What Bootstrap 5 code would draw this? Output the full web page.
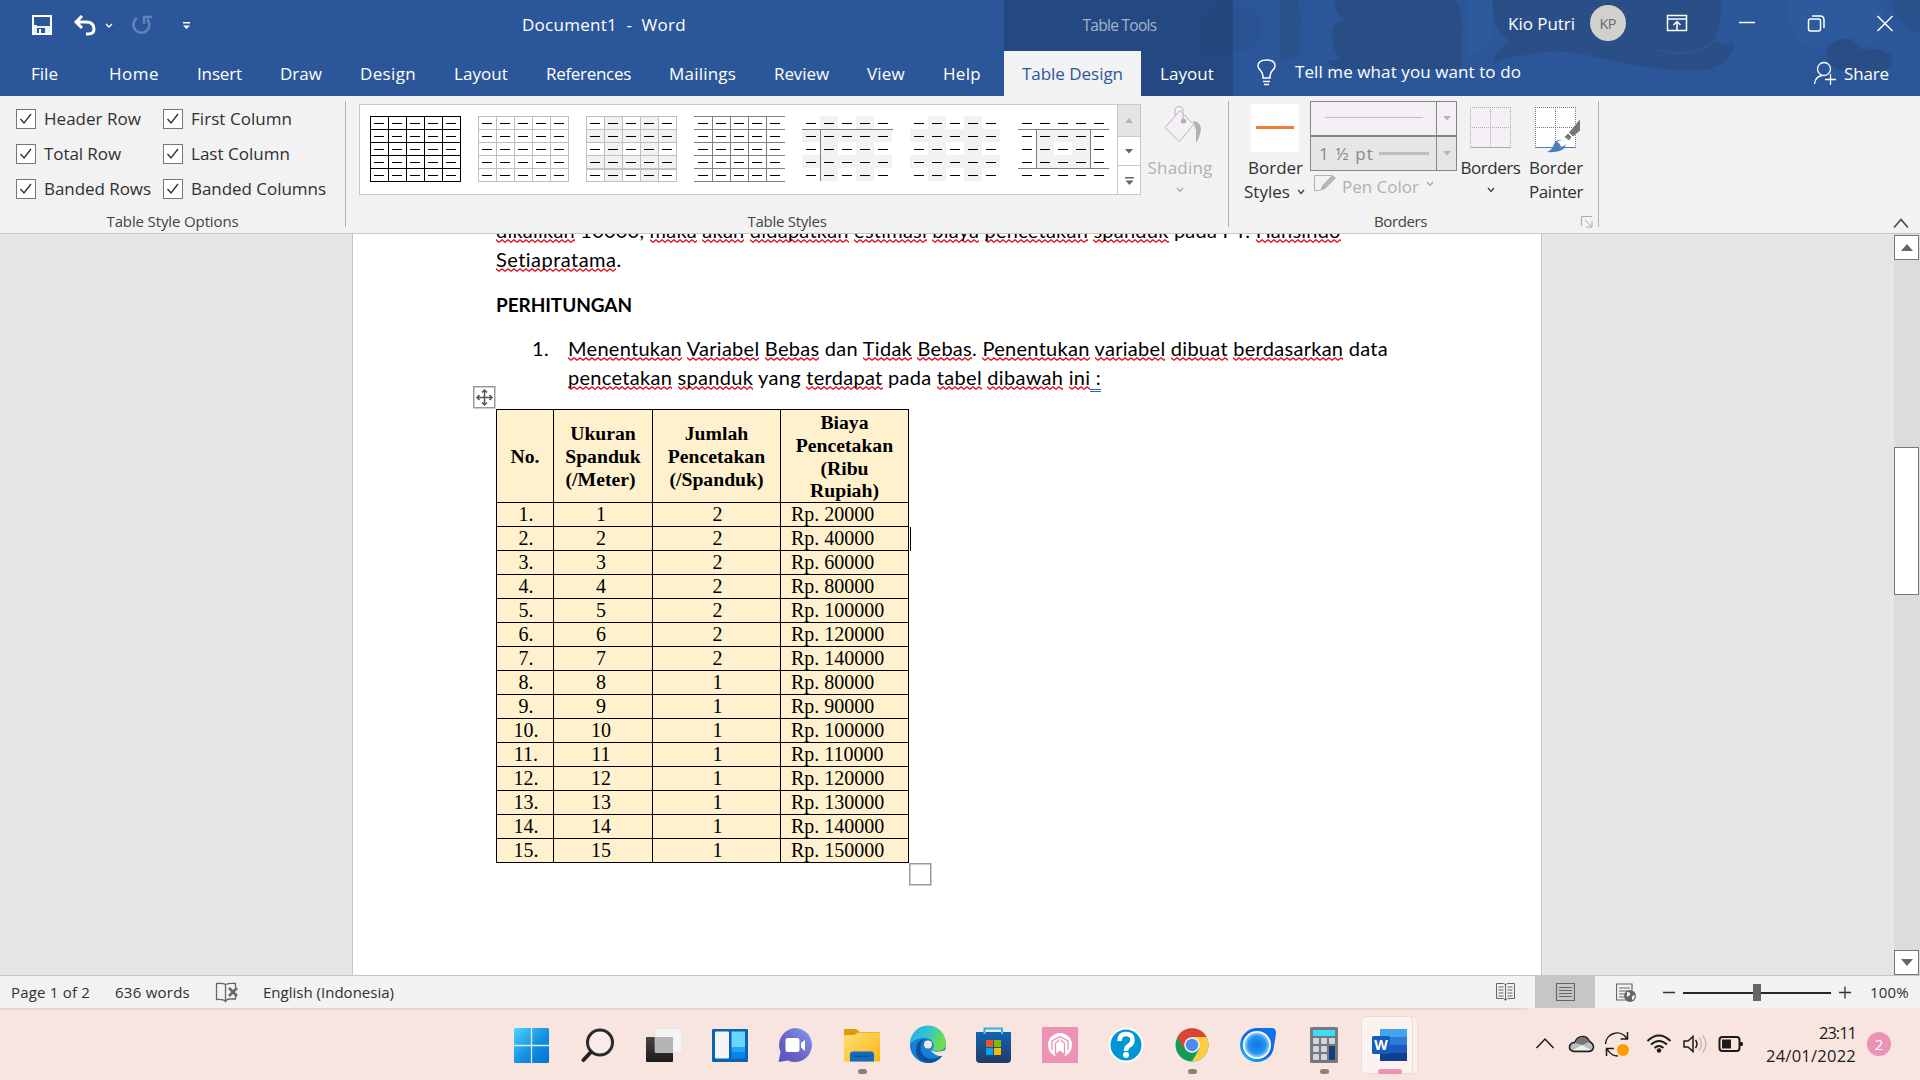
<!DOCTYPE html>
<html lang="id">
<head>
<meta charset="utf-8">
<title>Document1 - Word</title>
<link href="https://cdn.jsdelivr.net/npm/bootstrap@5.3.0/dist/css/bootstrap.min.css" rel="stylesheet">
<style>
body{width:1920px;height:1080px;overflow:hidden;font-family:"Open Sans","Noto Sans",sans-serif;font-size:17px;line-height:24px;color:#303030;background:#e6e6e6}
svg{display:block;flex:none}
[data-w]{display:inline-block;white-space:pre;justify-self:start}
.app-head{height:96px;background:#2b579a;color:#fff}
.head-art{left:1160px;top:0;z-index:0}
.title-row{height:51px;display:grid;grid-template-columns:32px 41px 28px 29px 51px 341px 482px 229px;align-items:center;z-index:1}
.title-row>span,.title-row>svg{margin-bottom:2px}
.tools-tab{background:#23457acc;height:51px;color:#a3b4d0;font-size:15.5px;padding:0 0 2px 2px}
.win-tools{height:47px}
.tab-row{height:45px;display:grid;grid-template-columns:31px 78px 88px 83px 80px 94px 92px 123px 105px 93px 76px 61px 137px 92px 62px 517px 32px 76px;align-items:center;z-index:1}
.tab-open{background:#f2f2f2;color:#2b579a;height:45px}
.tab-ctx{background:#23457acc;height:45px}
.bulb{justify-self:end;margin-right:9px}
.ribbon{height:138px;background:#f2f2f2;border-bottom:1px solid #c8c8c8}
.grp{height:126px;margin-top:5px;border-right:1px solid #b1b1b1}
.grp-main{height:108px}
.g-options{width:346px}.g-styles{width:883px}.g-borders{width:370px}
.caption-line{height:24px;font-size:15px;color:#444}
.opts{display:grid;grid-template-columns:147px 1fr;grid-auto-rows:35px;padding-left:16px;height:108px}
.tick{width:20px;height:20px;border:1.5px solid #767676;background:#fff;margin-right:8px}
.gallery{width:782px;height:91px;margin:3px 0 0 13px;border:1px solid #c8c8c8;background:#fff}
.gal-thumbs{padding:11px 0 0 10px;gap:17px;width:758px}
.gal-nav{width:23px;border-left:1px solid #c8c8c8}
.gal-nav>div{height:29px;border-bottom:1px solid #c8c8c8}
.gal-nav>div:first-child{height:32px;background:#e4e4e4}
.gal-nav>div:last-child{border:0}
.dim{color:#b1b1b1}
.shade-btn{margin-left:6px;width:66px;height:108px}
.b-style{width:81px;height:108px;padding-left:15px}
.combo{width:147px;height:35px;border:1px solid #868686;background:#e6e6e6;color:#868686}
.combo .drop{width:20px;border-left:1px solid #868686}
.combo-top{background:#f5f0f6}
.b-btn{height:108px}
.launcher{margin:0 4px 0 153px}
.work{height:742px;background:#e6e6e6;border-bottom:1px solid #c6c6c6}
.sheet{width:1190px;margin-left:352px;height:741px;background:#fff;border:solid #c6c6c6;border-width:0 1px;overflow:hidden;font-family:Lato,sans-serif;font-size:20px;line-height:29px;color:#000;padding-left:143px}
.para-cut{margin-top:-18px;height:58px}
.sq{padding-bottom:1px;background:url("data:image/svg+xml,%3Csvg xmlns='http://www.w3.org/2000/svg' width='6' height='4'%3E%3Cpath d='M-1 0L0 .8L3 3.2L6 .8L7 0' fill='none' stroke='%23e81123' stroke-width='1.3'/%3E%3C/svg%3E") repeat-x left bottom}
.dbl{border-bottom:3px double #2b62d9}
.doc-h{margin-top:16px;height:29px;font-size:19px}
.item{margin-top:15px;height:58px;display:grid;grid-template-columns:36px 36px 1fr}
.tbl-wrap{margin-top:17px;width:413px;height:454px}
.doc-tbl{border-collapse:collapse;table-layout:fixed;width:412px;font-family:"Liberation Serif",serif;font-size:20px;line-height:22px;background:#fff1ce}
.doc-tbl th,.doc-tbl td{border:1px solid #000;padding:0;text-align:center;height:24px;white-space:pre}
.doc-tbl td{vertical-align:top}
.doc-tbl th{height:93px;font-size:19.7px;line-height:22.7px;vertical-align:middle;padding-top:1px}
.doc-tbl td:nth-child(1){padding-left:2px}.doc-tbl td:nth-child(2){padding-right:4px}.doc-tbl td:nth-child(3){padding-left:2px}
.doc-tbl td:nth-child(4){text-align:left;padding-left:10px}
.handle{left:-23px;top:-23px}.grip{left:413px;top:454px}.caret{left:414px;top:118px;width:1px;height:24px;background:#000}
.scroller{width:26px;background:#dcdcdc;padding-top:1px}
.sc-box{height:25px;width:25px;border:1px solid #777;background:#fff}
.sc-thumb{margin-top:187px;height:148px;width:25px;border:1px solid #777;background:#fff}
.status{height:32px;background:#f2f2f2;font-size:15px;display:grid;grid-template-columns:11px 104px 100px 48px 1233px 39px 60px 21px 254px 50px;align-items:center}
.view-on{background:#c6c6c6;height:32px}
.taskbar{height:72px;background:#f9e5df;color:#1b1b1b;padding-left:499px}
.edge-line{left:0;top:0;width:1527px;height:2px;background:#ecd6d1}
.clock{width:100px;font-size:16.5px;line-height:23px;padding-top:13px}
</style>
<script src="https://cdn.jsdelivr.net/npm/bootstrap@5.3.0/dist/js/bootstrap.bundle.min.js"></script>
</head>
<body class="d-flex flex-column">
<header class="app-head position-relative">
  <svg class="head-art position-absolute" width="760" height="96" viewBox="1160 0 760 96">
    <g fill="#294d83" opacity=".85">
      <path d="M1200 58Q1206 50 1203 44Q1194 20 1212 7Q1222 0 1233 5V60Q1215 52 1200 58z" opacity=".6"/>
      <path d="M1233 8Q1262 2 1262 24Q1264 50 1240 52L1233 50z" opacity=".35"/>
      <path d="M1280 0H1298Q1304 24 1298 42Q1304 50 1304 52Q1290 62 1280 58z" opacity=".7"/>
      <path d="M1335 0H1456Q1466 20 1460 48Q1464 62 1460 70H1342Q1328 66 1326 59Q1336 62 1340 58Q1330 48 1333 28Q1338 20 1344 20Q1334 12 1335 0z"/>
      <path d="M1493 0H1721Q1722 22 1714 40Q1724 48 1732 42Q1738 44 1730 56Q1716 74 1680 70Q1640 68 1600 58Q1560 46 1520 56Q1500 58 1493 66Q1494 52 1510 40Q1490 28 1493 0z"/>
      <path d="M1826 56Q1828 38 1846 39Q1858 42 1860 50Q1874 46 1890 54Q1896 62 1886 70Q1872 82 1850 72Q1830 72 1826 56z"/>
      <path d="M1890 0H1920V34Q1900 28 1890 0z" opacity=".7"/>
    </g>
    <g fill="#3564a8" opacity=".25"><path d="M1790 0H1880Q1890 40 1870 44Q1850 30 1820 50Q1780 40 1790 0z"/><path d="M1466 0h26v40l-26 20z"/></g>
    <path d="M1658 50Q1690 60 1716 40" stroke="#2b579a" stroke-width="2" fill="none"/>
  </svg>
  <div class="title-row position-relative">
    <span></span>
    <svg width="20" height="20" viewBox="32 15 20 20"><path d="M33 16h18v18H33z" fill="none" stroke="#fff" stroke-width="2"/><path d="M32 26h20v9H32zM34 15h3v12h-3z" fill="#fff" opacity=".9"/><path d="M34 17h16v8H34zM37 28h8v5h-8z" fill="#2b579a"/><path d="M39 29h2v4h-2z" fill="#fff"/></svg>
    <svg width="24" height="22" viewBox="73 14 24 22"><path d="M82 16l-6 6 6 6M77 22h9q8 0 8 7 0 5-6 5h-2" fill="none" stroke="#fff" stroke-width="3"/></svg>
    <svg width="16" height="10" viewBox="102 20 16 10"><path d="M107 24l3 3 3-3" fill="none" stroke="#fff" stroke-width="1.3"/></svg>
    <svg width="22" height="22" viewBox="130 14 22 22"><path d="M137 18a8 8 0 1 0 10 1M144 24v-7h8" fill="none" stroke="#5f82b8" stroke-width="2.6"/></svg>
    <svg width="10" height="10" viewBox="181 20 10 10"><path d="M183 22h7v1.5h-7zM183 25.500h7l-3.500 3.500z" fill="#fff"/></svg>
    <span data-w="164">Document1  -  Word</span>
    <div class="tools-tab d-flex align-items-center justify-content-center"><span data-w="74">Table Tools</span></div>
  </div>
  <div class="win-tools position-absolute top-0 end-0 d-flex align-items-center">
    <span data-w="67">Kio Putri</span>
    <svg width="345" height="47" viewBox="1575 0 345 47"><circle cx="1608" cy="23" r="18" fill="#d2d0ce"/><text x="1608" y="28.500" text-anchor="middle" font-size="14.500" fill="#6a6a6a" textLength="17">KP</text>
      <g fill="none" stroke="#fff" stroke-width="1.500"><path d="M1667.500 15.500h19v15h-19zM1667.500 19h19M1677 30v-8M1673.500 25l3.500-3.500 3.500 3.500M1739 22.500h16"/><rect x="1808.500" y="19" width="12" height="12" rx="2"/><path d="M1812 16h8q4 0 4 4v8"/><path d="M1877.500 16l15 15M1892.500 16l-15 15"/></g></svg>
  </div>
  <nav class="tab-row position-relative">
    <span></span><span data-w="27">File</span><span data-w="50">Home</span><span data-w="45">Insert</span><span data-w="42">Draw</span><span data-w="56">Design</span><span data-w="54">Layout</span><span data-w="85">References</span><span data-w="67">Mailings</span><span data-w="55">Review</span><span data-w="38">View</span><span data-w="38">Help</span>
    <div class="tab-open d-flex align-items-center justify-content-center"><span data-w="101">Table Design</span></div>
    <div class="tab-ctx d-flex align-items-center justify-content-center"><span data-w="54">Layout</span></div>
    <svg class="bulb" width="40" height="30" viewBox="1246 59 40 30"><path d="M1263 78v-2q0-2-2-5-3-3-3-5 0-6 8.500-6t8.500 6q0 2-3 5-2 3-2 5v2zM1263 81.500h7M1264 84.500h5" fill="none" stroke="#fff" stroke-width="1.500"/></svg>
    <span class="pb-1" data-w="226">Tell me what you want to do</span>
    <svg width="26" height="30" viewBox="1812 62 26 30"><g fill="none" stroke="#fff" stroke-width="1.300"><circle cx="1824" cy="72" r="6.500"/><path d="M1814.500 87q1-8 8-8.500M1830.500 77v11M1825 82.500h11"/></g></svg>
    <span data-w="45">Share</span>
  </nav>
</header>

<section class="ribbon d-flex position-relative">
  <div class="grp g-options">
    <div class="opts" id="opts"></div>
    <div class="caption-line text-center"><span data-w="132">Table Style Options</span></div>
  </div>
  <div class="grp g-styles">
    <div class="grp-main d-flex">
      <div class="gallery d-flex">
        <div class="gal-thumbs d-flex" id="thumbs"></div>
        <div class="gal-nav">
          <div class="d-flex align-items-center justify-content-center"><svg width="8" height="5"><path d="M0 5L4 0l4 5z" fill="#b5b5b5"/></svg></div>
          <div class="d-flex align-items-center justify-content-center"><svg width="8" height="5"><path d="M0 0h8L4 4.500z" fill="#666"/></svg></div>
          <div class="d-flex align-items-center justify-content-center"><svg width="9" height="8"><path d="M0 0h9v1.500H0zM.5 3.500h8l-4 4.500z" fill="#666"/></svg></div>
        </div>
      </div>
      <div class="shade-btn d-flex flex-column align-items-center dim">
        <svg width="66" height="55" viewBox="1147 101 66 55"><path d="M1165 127.500l15-17 13.500 14-14 17z" fill="#f5f0f6" stroke="#b5b5b5"/><path d="M1175 116v-6q0-3.500 4-3.500t4 3.500v10" fill="none" stroke="#b5b5b5"/><circle cx="1183.500" cy="121" r="2.600" fill="#b1b1b1"/><path d="M1193 121q7 0 8 8-1 8-5 14v-13z" fill="#b1b1b1"/></svg>
        <span data-w="65">Shading</span>
        <svg class="mt-1" width="8" height="12"><path d="M1 4l3 3.500L7 4" fill="none" stroke="#aaa" stroke-width="1.300"/></svg>
      </div>
    </div>
    <div class="caption-line text-center"><span data-w="79">Table Styles</span></div>
  </div>
  <div class="grp g-borders">
    <div class="grp-main d-flex">
      <div class="b-style">
        <svg width="66" height="55" viewBox="1244 101 66 55"><path d="M1251 104h48v48h-48z" fill="#fff"/><path d="M1256 126h38v3h-38z" fill="#ed7d31"/></svg>
        <div class="ps-1"><span data-w="55">Border</span></div>
        <div class="d-flex align-items-center"><span data-w="46">Styles</span><svg class="ms-2" width="8" height="8"><path d="M0 2l3 3.500L6 2" fill="none" stroke="#444" stroke-width="1.400"/></svg></div>
      </div>
      <div>
        <div class="combo combo-top d-flex justify-content-between align-items-stretch"><svg width="125" height="33"><path d="M14 15.500h98" stroke="#c9b8cd"/></svg><div class="drop d-flex align-items-center justify-content-center"><svg width="8" height="5"><path d="M0 0h8L4 4.500z" fill="#b5b5b5"/></svg></div></div>
        <div class="combo d-flex justify-content-between align-items-stretch"><div class="d-flex align-items-center ps-2"><span data-w="55">1 ½ pt</span><svg class="ms-1" width="51" height="3"><path d="M1 0h50v3H1z" fill="#bdbdbd"/></svg></div><div class="drop d-flex align-items-center justify-content-center"><svg width="8" height="5"><path d="M0 0h8L4 4.500z" fill="#b5b5b5"/></svg></div></div>
        <div class="dim d-flex align-items-center"><svg width="32" height="24" viewBox="1310 173 32 24"><path d="M1332 175.500h-17.500v15h5" fill="none" stroke="#b1b1b1"/><path d="M1320 191l2-5 10-11 4 3-11 11z" fill="#b5b5b5"/></svg><span class="pt-1" data-w="77">Pen Color</span><svg class="ms-2" width="8" height="8"><path d="M0 1l3 3.500L6 1" fill="none" stroke="#aaa" stroke-width="1.300"/></svg></div>
      </div>
      <div class="b-btn d-flex flex-column align-items-center">
        <svg width="67" height="55" viewBox="1457 101 67 55"><path d="M1470 107h41v41h-41z" fill="#f5f0f6"/><path d="M1470 107.500h41M1470 127.500h41M1470.500 107v41M1490.500 107v41M1510.500 107v41" stroke="#b1a9b3" stroke-dasharray="1 1"/><path d="M1470 147.500h41" stroke="#aaa"/></svg>
        <span data-w="60">Borders</span>
        <svg class="mt-1" width="8" height="12"><path d="M1 4l3 3.500L7 4" fill="none" stroke="#444" stroke-width="1.400"/></svg>
      </div>
      <div class="b-btn d-flex flex-column align-items-center">
        <svg width="64" height="55" viewBox="1524 101 64 55"><path d="M1535 107h41v41h-41z" fill="#fff"/><path d="M1535 107.500h41M1535 127.500h41M1535.500 107v41M1555.500 107v41M1575.500 107v41" stroke="#777" stroke-dasharray="1 1"/><path d="M1535 147.500h41" stroke="#4a7ebb"/><path d="M1580 119.500v11l-7 6-4-4z" fill="#777"/><path d="M1568 133l4 4-3 4-5-4z" fill="#777" stroke="#fff"/><path d="M1547 152q6-3 7-8 3-5 8-4 5 2 3 7-3 6-18 5z" fill="#4a7ebb"/><path d="M1557 142q5-4 9 0 0 4-5 5-1-4-4-5z" fill="#fff"/></svg>
        <span data-w="54">Border</span><span data-w="54">Painter</span>
      </div>
    </div>
    <div class="caption-line d-flex justify-content-end align-items-center"><span data-w="53">Borders</span><svg class="launcher" width="14" height="13"><path d="M1.500 11V1.500H12M5 5l7 7M12 6v6H6" fill="none" stroke="#aaa"/></svg></div>
  </div>
  <svg class="ms-auto align-self-end me-2 mb-1" width="22" height="14" viewBox="1890 215 22 14"><path d="M1894 227.500l7-8 7 8" fill="none" stroke="#444" stroke-width="1.500"/></svg>
</section>

<main class="work d-flex justify-content-between">
  <article class="sheet">
    <div class="para-cut"><span data-w="845"><span class="sq">dikalikan</span> 10000, <span class="sq">maka</span> <span class="sq">akan</span> <span class="sq">didapatkan</span> <span class="sq">estimasi</span> <span class="sq">biaya</span> <span class="sq">pencetakan</span> <span class="sq">spanduk</span> pada PT. <span class="sq">Hansindo</span></span><br><span data-w="126"><span class="sq">Setiapratama</span>.</span></div>
    <div class="doc-h fw-bold"><span data-w="136">PERHITUNGAN</span></div>
    <div class="item"><span></span><span data-w="17">1.</span><div><span data-w="820"><span class="sq">Menentukan</span> <span class="sq">Variabel</span> <span class="sq">Bebas</span> dan <span class="sq">Tidak</span> <span class="sq">Bebas</span>. <span class="sq">Penentukan</span> <span class="sq">variabel</span> <span class="sq">dibuat</span> <span class="sq">berdasarkan</span> data</span><br><span data-w="533"><span class="sq">pencetakan</span> <span class="sq">spanduk</span> yang <span class="sq">terdapat</span> pada <span class="sq">tabel</span> <span class="sq">dibawah</span> <span class="sq">ini</span><span class="dbl"> :</span></span></div></div>
    <div class="tbl-wrap position-relative">
      <table class="doc-tbl">
        <colgroup><col style="width:57px"><col style="width:99px"><col style="width:128px"><col style="width:128px"></colgroup>
        <thead><tr><th>No.</th><th>Ukuran
Spanduk
(/Meter) </th><th>Jumlah
Pencetakan
(/Spanduk)</th><th>Biaya
Pencetakan
(Ribu
Rupiah)</th></tr></thead>
        <tbody id="rows"></tbody>
      </table>
      <svg class="handle position-absolute" width="23" height="23"><rect x=".75" y=".75" width="21" height="21" fill="#fff" stroke="#999" stroke-width="1.500"/><path d="M11.500 4v15M4 11.500h15M9 6.500L11.500 4 14 6.500M9 16.500l2.500 2.500 2.500-2.500M6.500 9L4 11.500 6.500 14M16.500 9l2.500 2.500-2.500 2.500" fill="none" stroke="#555" stroke-width="1.500"/></svg>
      <svg class="grip position-absolute" width="23" height="23"><rect x=".75" y=".75" width="21" height="21" fill="#fff" stroke="#999" stroke-width="1.500"/></svg>
      <div class="caret position-absolute"></div>
    </div>
  </article>
  <div class="scroller d-flex flex-column">
    <div class="sc-box d-flex align-items-center justify-content-center"><svg width="12" height="7"><path d="M0 7L6 0l6 7z" fill="#666"/></svg></div>
    <div class="sc-thumb"></div>
    <div class="sc-box d-flex align-items-center justify-content-center mt-auto"><svg width="12" height="7"><path d="M0 0h12L6 7z" fill="#666"/></svg></div>
  </div>
</main>

<footer class="status">
  <span></span><span data-w="79">Page 1 of 2</span><span data-w="75">636 words</span>
  <svg width="24" height="22" viewBox="215 981 24 22"><path d="M225.500 984.500q-2-1.500-9-1v16q7-.5 9 2 1-2.500 4-2.500h6v-4M225.500 984.500v17M225.500 984.500q3-1.500 10-1v4" fill="none" stroke="#666" stroke-width="1.300"/><path d="M229 988l8 8M237 988l-8 8" stroke="#666" stroke-width="2.600"/></svg>
  <span data-w="131">English (Indonesia)</span>
  <svg width="20" height="20" viewBox="1496 982 20 20"><path d="M1496.500 983.500h7l2 1 2-1h7v15h-7l-2 2-2-2h-7zM1505.500 984v16M1498.500 987h5M1498.500 990h5M1498.500 993h5M1498.500 996h5M1507.500 987h5M1507.500 990h5M1507.500 993h5M1507.500 996h5" fill="none" stroke="#666"/></svg>
  <div class="view-on d-flex align-items-center justify-content-center"><svg width="20" height="20"><path d="M1.500 1.500h18v17h-18zM4 5.500h13M4 8.500h13M4 11.500h13M4 14.500h13" fill="none" stroke="#666" stroke-width="1.200"/></svg></div>
  <span></span>
  <svg width="240" height="24" viewBox="1616 979 240 24"><path d="M1632 989v-6h-15.500v16h9M1619 987h11M1619 990h9M1619 993h6M1619 996h5" fill="none" stroke="#666" stroke-width="1.200"/><circle cx="1630" cy="995" r="6" fill="#666"/><path d="M1627 991q4 0 3 3l-3 2zM1632 995l3-1-1 4-2 1z" fill="#f2f2f2"/><path d="M1663 991.500h12M1839 991.500h12M1845 985.500v12" stroke="#333" stroke-width="1.300"/><path d="M1683 991h148v2h-148z" fill="#262626"/><path d="M1753 983h8v17h-8z" fill="#666"/></svg>
  <span data-w="39">100%</span>
</footer>

<footer class="taskbar d-flex position-relative">
  <div class="edge-line position-absolute"></div>
  <svg width="1028" height="72" viewBox="499 1008 1028 72">
    <defs>
      <linearGradient id="wn" x1="0" y1="0" x2="1" y2="1"><stop offset="0" stop-color="#4fd2ff"/><stop offset=".55" stop-color="#1490df"/><stop offset="1" stop-color="#0072d0"/></linearGradient>
      <linearGradient id="ch" x1="0" y1="1" x2="1" y2="0"><stop offset="0" stop-color="#5a50c4"/><stop offset=".4" stop-color="#6a62c6"/><stop offset="1" stop-color="#7f9cf2"/></linearGradient>
      <linearGradient id="fd" x1="0" y1="0" x2="1" y2="1"><stop offset="0" stop-color="#ffdc75"/><stop offset="1" stop-color="#fbb813"/></linearGradient>
      <linearGradient id="eg" x1="0" y1="0" x2="1" y2=".4"><stop offset="0" stop-color="#2ba6e8"/><stop offset=".5" stop-color="#30c3d4"/><stop offset="1" stop-color="#6be04a"/></linearGradient>
      <linearGradient id="st" x1="0" y1="0" x2="0" y2="1"><stop offset="0" stop-color="#0f65b6"/><stop offset="1" stop-color="#233a63"/></linearGradient>
      <radialGradient id="rg"><stop offset="0" stop-color="#1573ee"/><stop offset=".7" stop-color="#2196f0"/><stop offset="1" stop-color="#a9d6f8"/></radialGradient>
      <linearGradient id="rb" x1="1" y1="0" x2="0" y2="1"><stop offset="0" stop-color="#0d78f2"/><stop offset=".5" stop-color="#1264ee"/><stop offset="1" stop-color="#19c6f5"/></linearGradient>
      <linearGradient id="dk" x1="0" y1="0" x2="0" y2="1"><stop offset="0" stop-color="#474543"/><stop offset="1" stop-color="#1b1a19"/></linearGradient>
    </defs>
    <rect x="514" y="1028" width="35" height="35" rx="1.500" fill="url(#wn)"/><path d="M531.500 1028v35M514 1045.500h35" stroke="#d9ecf8" stroke-width="1.300"/>
    <circle cx="600" cy="1042.500" r="12.500" fill="#f9ebe9" stroke="#2b2b2b" stroke-width="3"/><path d="M591 1052l-7.500 8" stroke="#222" stroke-width="4" stroke-linecap="round"/>
    <rect x="646" y="1037" width="27" height="25" rx="1" fill="url(#dk)"/><rect x="655" y="1028.500" width="27" height="24" rx="1" fill="#f4f4f4" stroke="#ddd"  stroke-width=".6"/><path d="M655 1037h18v15.500h-18z" fill="#b6b5b4"/>
    <rect x="712" y="1029" width="36" height="33" rx="1" fill="#0c62b4"/><rect x="715" y="1031.500" width="14" height="27" rx="1" fill="#f5f5f5"/><path d="M731.500 1031.500h13.500v16h-13.500z" fill="#69d6ff"/><path d="M731.500 1047h13.500v5h-13.500z" fill="#1ea4f5"/><path d="M731.500 1052h13.500v6.500h-13.500z" fill="#0b83ea"/>
    <path d="M795 1028a17 17 0 1 1-7 32.500l-9.500 1.500 2-10A17 17 0 0 1 795 1028z" fill="url(#ch)"/><rect x="785.500" y="1038" width="14" height="14" rx="2" fill="#fff"/><path d="M801 1043l4-3v11l-4-3.500z" fill="#fff"/>
    <path d="M844 1030q0-1 1-1h11l4 3h19.500v4H844z" fill="#dc9a0b"/><path d="M844 1035h10l4-2.500h22v29H844z" fill="url(#fd)"/><path d="M850 1061.500v-7q0-3 3-3h18q3 0 3 3v7z" fill="#0f6cc0"/><path d="M854 1055.500h15v1.500h-15z" fill="#0c4c8c"/>
    <circle cx="928" cy="1045" r="18" fill="#1380d8"/><path d="M910 1044a18 18 0 0 1 36-1q0 8-8 8-5 0-6-2 3-3 1-6-2-5-9-5-9 0-14 6z" fill="url(#eg)"/><path d="M925 1038q-8 8-2 17 8 8 20 0-6 8-15 8-12-2-12-13 0-9 9-12z" fill="#0d4f9c"/><path d="M930 1049q4 5 16 1l2 1-4 5q-10 1-14-7z" fill="#f9e5df"/><circle cx="928" cy="1044.500" r="4" fill="#f9e5df"/>
    <path d="M984.500 1035v-6.500h17.500v6.500" fill="none" stroke="#29b6f0" stroke-width="2"/><path d="M976 1032h35v27q0 4-4 4h-27q-4 0-4-4z" fill="url(#st)"/><path d="M984.500 1032v2M1002 1032v2" stroke="#49c8f5" stroke-width="2"/><path d="M986 1040h7v7h-7z" fill="#f25022"/><path d="M994 1040h7v7h-7z" fill="#7fba00"/><path d="M986 1048h7v7h-7z" fill="#00a4ef"/><path d="M994 1048h7v7h-7z" fill="#ffb900"/>
    <path d="M1042 1027h36v36h-36z" fill="#ec92b6"/><circle cx="1060" cy="1045" r="12" fill="#fff"/><path d="M1052 1050v-9l8-4.500 8 4.500v9" fill="none" stroke="#ec92b6" stroke-width="1.300"/><path d="M1055.500 1055v-12l3-2v-1.500M1064.500 1055v-12l-3-2v-1.500" fill="none" stroke="#ec92b6" stroke-width="1.300"/><path d="M1055.500 1057v-3l4.500-3.500 4.500 3.500v3z" fill="#ec92b6"/>
    <circle cx="1126" cy="1045" r="17.500" fill="#fff"/><circle cx="1126" cy="1045" r="15.500" fill="#0096d6"/><path d="M1119.500 1041q0-7 6.500-7t6.500 6q0 4-4 6-2.500 1.500-2.500 5" fill="none" stroke="#fff" stroke-width="4.500"/><circle cx="1126" cy="1055" r="3" fill="#fff"/>
    <circle cx="1192" cy="1045" r="16.500" fill="#109d58"/><path d="M1177.500 1037a16.500 16.500 0 0 1 29 0l-14.500 0-8 12z" fill="#db4437"/><path d="M1192 1037h14.500a16.500 16.500 0 0 1-14.500 24.500l7.500-13z" fill="#ffcd40"/><circle cx="1192" cy="1045" r="7.800" fill="#f1f1f1"/><circle cx="1192" cy="1045" r="6.200" fill="#4c8bf5"/>
    <path d="M1257 1028h15q4 0 4 5-1 8-2 13a17 17 0 1 1-17-18z" fill="url(#rb)"/><circle cx="1257" cy="1045" r="14" fill="#fff"/><circle cx="1257" cy="1045" r="12.500" fill="url(#rg)"/>
    <rect x="1310" y="1027" width="28" height="36" rx="1.500" fill="#76797d"/><path d="M1313 1030h22v6h-22z" fill="#3fdcf8"/><g fill="#cfd6e0"><rect x="1313" y="1038" width="6" height="6" rx="1"/><rect x="1321" y="1038" width="6" height="6" rx="1"/><rect x="1329" y="1038" width="6" height="6" rx="1"/><rect x="1313" y="1046" width="6" height="6" rx="1"/><rect x="1321" y="1046" width="6" height="6" rx="1"/><rect x="1313" y="1054" width="6" height="6" rx="1"/><rect x="1321" y="1054" width="6" height="6" rx="1"/></g><rect x="1329" y="1046" width="6" height="14" rx="1" fill="#11407a"/>
    <rect x="1366" y="1017" width="52" height="57" rx="4" fill="#fbeeeb" stroke="#eed8d3"/><rect x="1361.500" y="1016.500" width="51" height="57" rx="4" fill="#fcf3f1" stroke="#eed8d3"/>
    <path d="M1380 1029h27v8h-27z" fill="#41a5ee"/><path d="M1380 1037h27v8h-27z" fill="#2b7cd3"/><path d="M1380 1045h27v8h-27z" fill="#185abd"/><path d="M1380 1053h27v8h-27z" fill="#103f91"/><rect x="1372" y="1036" width="18" height="18" rx="1.500" fill="#185abd"/><text x="1381" y="1050" text-anchor="middle" font-size="14" font-weight="700" fill="#fff">W</text>
    <g fill="#8c807e"><rect x="858" y="1069" width="9" height="5" rx="2.500"/><rect x="1188" y="1069" width="9" height="5" rx="2.500"/><rect x="1320" y="1069" width="9" height="5" rx="2.500"/></g><rect x="1378" y="1069" width="24" height="5" rx="2.500" fill="#ec92b6"/>
  </svg>
  <svg width="229" height="72" viewBox="1527 1008 229 72" fill="none" stroke="#1b1b1b" stroke-width="1.500">
    <path d="M1536.500 1048l8.500-9 8.500 9"/>
    <path d="M1574 1051.500q-5-1-4.500-5 1-4 5-4 3-6 8-6 5 0 7 5 4 2 4 6-1 4-5 4z" fill="#bcbcbc"/><path d="M1575 1043q3-6 7-6 5 0 6.500 5l-6 3z" fill="#777" stroke="none"/><path d="M1573 1050l9-5 9 5z" fill="#eee" stroke="none"/>
    <path d="M1605.500 1044a11.500 11.500 0 0 1 21-6M1627.500 1032v7h-7M1618 1056q-7 0-11-7M1606.500 1056v-7.500h7.500"/><circle cx="1623" cy="1050" r="6" fill="#ff9a00" stroke="none"/>
    <path d="M1647.500 1041q11.500-11 23 0M1651 1044.500q8-7 16 0M1654.500 1048q4.500-4 9 0" stroke-width="2"/><circle cx="1659" cy="1050.500" r="2.200" fill="#1b1b1b" stroke="none"/>
    <path d="M1684 1041h4l5-4.500v15l-5-4.500h-4zM1695.500 1040q3 4 0 8"/><path d="M1699 1037.500q5 6.500 0 13M1702.500 1035q7 9 0 18" stroke="#cdb9b5"/>
    <rect x="1719.500" y="1037" width="20" height="14" rx="3" stroke-width="2"/><path d="M1722 1039.500h9v9h-9zM1740 1042h2q1 0 1 2t-1 2h-2z" fill="#1b1b1b" stroke="none"/>
  </svg>
  <div class="clock d-flex flex-column align-items-end"><span data-w="37">23:11</span><span data-w="90">24/01/2022</span></div>
  <svg width="40" height="72" viewBox="1856 1008 40 72"><circle cx="1879" cy="1044" r="12" fill="#ec92b6"/><text x="1879" y="1049.500" text-anchor="middle" font-size="15" fill="#fff">2</text></svg>
</footer>

<script>
// Document table rows: size 1-15, print count and price
const prices=[20000,40000,60000,80000,100000,120000,140000,80000,90000,100000,110000,120000,130000,140000,150000];
document.getElementById('rows').innerHTML=prices.map((p,i)=>`<tr><td>${i+1}.</td><td>${i+1}</td><td>${i<7?2:1}</td><td>Rp. ${p}</td></tr>`).join('');

// Style option checkboxes with their label widths
document.getElementById('opts').innerHTML=[['Header Row',97],['First Column',101],['Total Row',77],['Last Column',99],['Banded Rows',107],['Banded Columns',135]]
 .map(([t,w])=>`<div class="d-flex align-items-center"><div class="tick"><svg width="17" height="17"><path d="M3.500 9l3.500 4L14 4" fill="none" stroke="#333" stroke-width="1.400"/></svg></div><span data-w="${w}">${t}</span></div>`).join('');

// Table style previews: 5x5 cells of 18x13
const H=(y,c,t=1)=>`<path d="M0 ${y}h91v${t}H0z" fill="${c}"/>`, V=(x,c,a=0,b=66)=>`<path d="M${x} ${a}h1v${b-a}h-1z" fill="${c}"/>`;
const all=[0,1,2,3,4,5], G='#bfbfbf', D='#7f7f7f';
const cell=(c,r)=>`<path d="M${c*18} ${r*13}h18v13h-18z" fill="#f2f2f2"/>`;
const shade=f=>[0,1,2,3,4].map(r=>[0,1,2,3,4].map(c=>f(c,r)?cell(c,r):'').join('')).join('');
const band=shade((c,r)=>c%2||r%2);
const looks=[
 all.map(i=>H(i*13,'#000')+V(i*18,'#000')).join(''),
 all.map(i=>H(i*13,G)+V(i*18,G)).join(''),
 band+all.map(i=>H(i*13,G,i==4?2:1)+V(i*18,G)).join(''),
 all.map(i=>H(i*13,D)+(i>0&&i<5?V(i*18,D):'')).join(''),
 band+H(13,D)+V(18,D,13,65),
 band,
 shade((c,r)=>c>0&&c<4&&r>0&&r<4&&!(c==2&&r==2))+H(13,D)+H(52,D)+V(18,D,13,52)+V(72,D,13,52)];
const dashes=[0,1,2,3,4].map(r=>[0,1,2,3,4].map(c=>`<path d="M${c*18+4} ${r*13+7}h10v1h-10z"/>`).join('')).join('');
document.getElementById('thumbs').innerHTML=looks.map(l=>`<svg width="91" height="66" shape-rendering="crispEdges">${l}${dashes}</svg>`).join('');

// Track each label so that it fills its nominal width
document.querySelectorAll('[data-w]').forEach(e=>{
 const n=e.textContent.length;
 e.style.letterSpacing=((e.dataset.w-e.getBoundingClientRect().width)/n)+'px';
});
</script>
</body>
</html>
